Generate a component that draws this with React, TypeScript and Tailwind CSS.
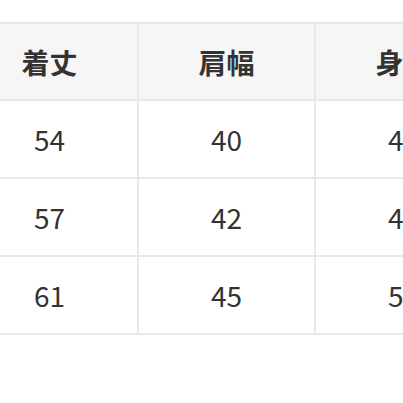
const header = ['着丈', '肩幅', '身幅'];
const rows = [
  ['54', '40', '48'],
  ['57', '42', '49'],
  ['61', '45', '52'],
];

export default function App() {
  return (
    <div
      className="w-[403px] h-[403px] overflow-hidden bg-white pt-[22px]"
      style={{ fontFamily: '"Noto Sans CJK JP", "Noto Sans", sans-serif' }}
    >
      <div className="ml-[-40px] w-[534px] grid grid-cols-[175px_175px_175px] gap-[2px] p-[2px] bg-[#e8e8e8]">
        {header.map(h => (
          <div
            key={h}
            className="h-[75px] flex items-center justify-center bg-[#f6f6f6] text-[28px] font-bold text-[#333]"
          >
            {h}
          </div>
        ))}
        {rows.map((r, i) =>
          r.map((v, j) => (
            <div
              key={`${i}-${j}`}
              className="h-[76px] flex items-center justify-center bg-white text-[28px] text-[#333]"
            >
              {v}
            </div>
          )),
        )}
      </div>
    </div>
  );
}
